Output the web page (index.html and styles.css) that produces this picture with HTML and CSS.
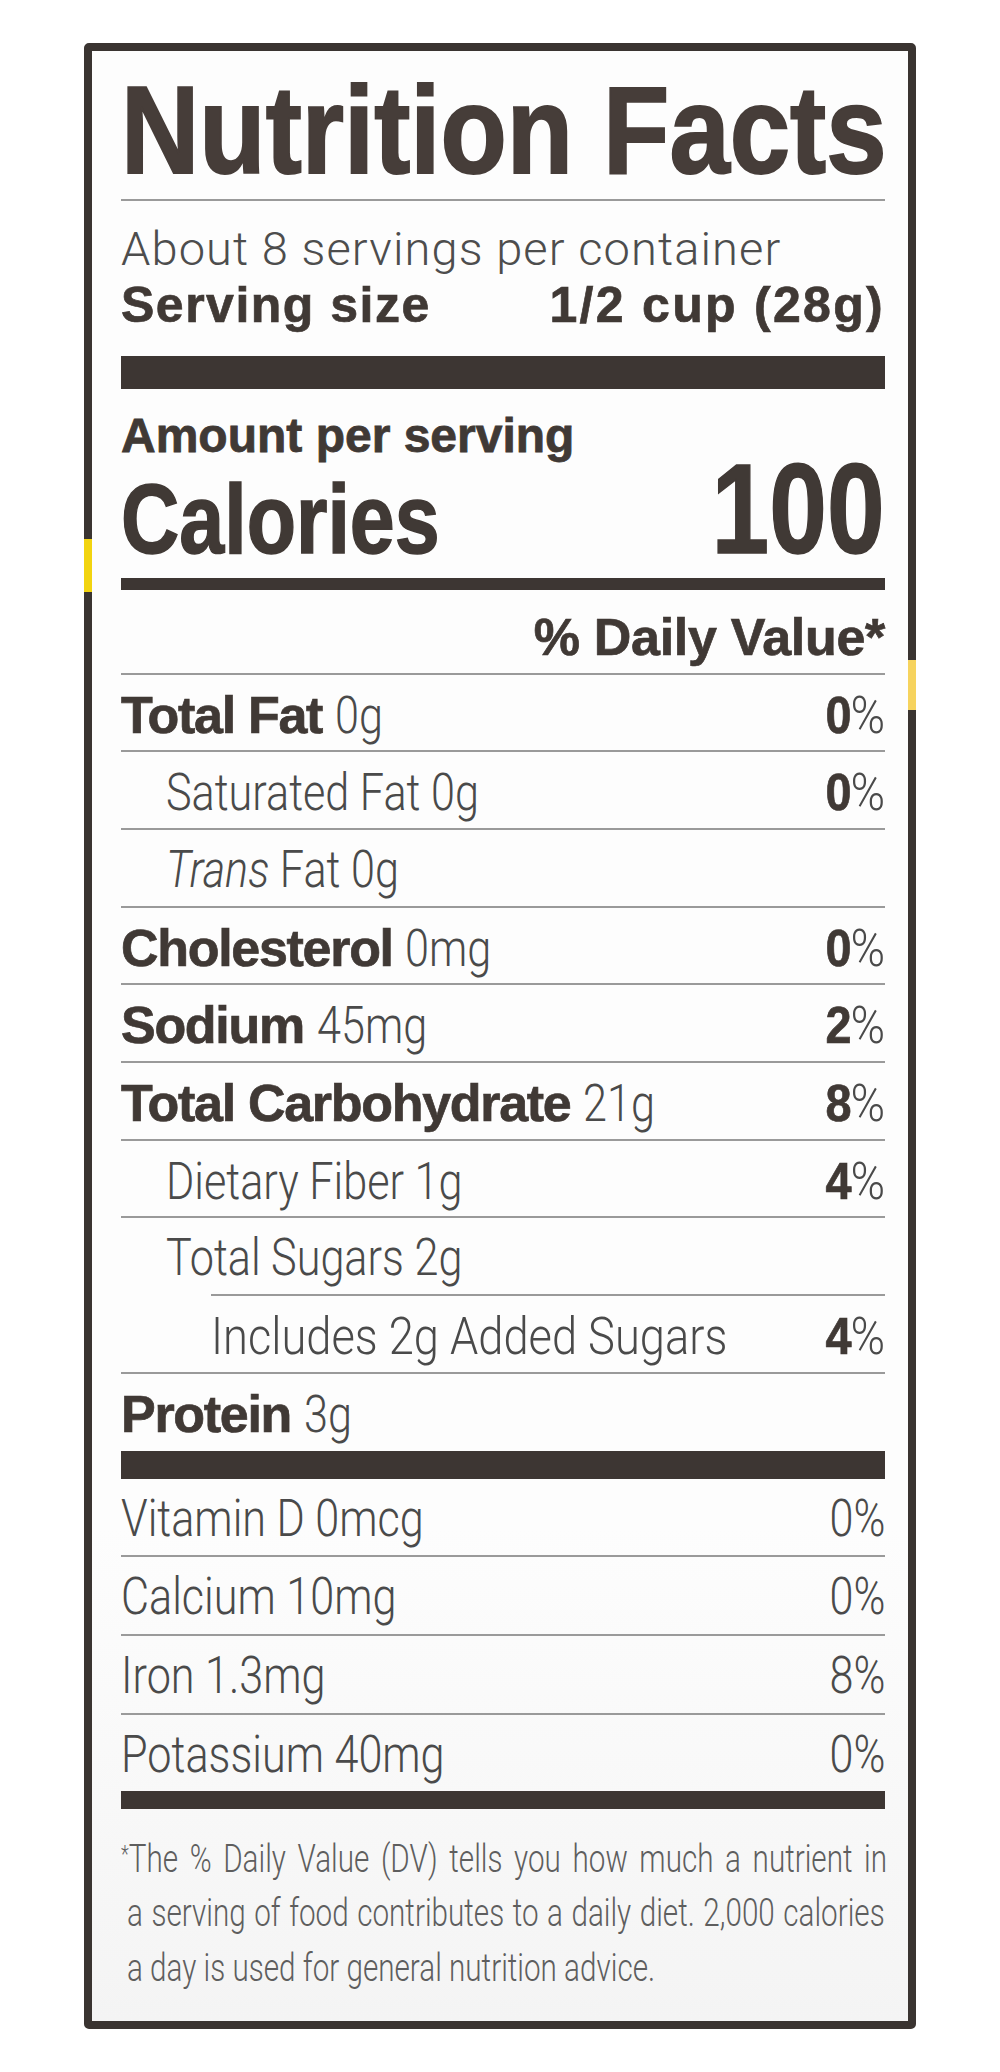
FILE: index.html
```html
<!DOCTYPE html>
<html lang="en">
<head>
    <meta charset="UTF-8">
    <meta name="viewport" content="width=device-width, initial-scale=1.0">
    <title>Nutrition Facts</title>
    <link rel="stylesheet" href="styles.css">
</head>
<body>
    <div class="label">
        <span class="smudge smudge-left"></span>
        <span class="smudge smudge-right"></span>

        <h1 class="title"><span class="title-text">Nutrition Facts</span></h1>

        <p class="per-container">About 8 servings per container</p>
        <p class="serving-size"><span>Serving size</span><span class="serving-amount">1/2 cup (28g)</span></p>
        <div class="bar bar-thick"></div>

        <p class="amount">Amount per serving</p>
        <p class="calories"><span class="cal-label">Calories</span><span class="cal-value">100</span></p>
        <div class="bar bar-medium"></div>

        <p class="dv-head">% Daily Value*</p>

        <div class="row"><span><b>Total Fat</b> <span class="cond">0g</span></span><span class="pct"><b>0</b>%</span></div>
        <div class="row sub"><span class="cond">Saturated Fat 0g</span><span class="pct"><b>0</b>%</span></div>
        <div class="row sub"><span class="cond"><i>Trans</i> Fat 0g</span></div>
        <div class="row"><span><b>Cholesterol</b> <span class="cond">0mg</span></span><span class="pct"><b>0</b>%</span></div>
        <div class="row"><span><b>Sodium</b> <span class="cond">45mg</span></span><span class="pct"><b>2</b>%</span></div>
        <div class="row"><span><b>Total Carbohydrate</b> <span class="cond">21g</span></span><span class="pct"><b>8</b>%</span></div>
        <div class="row sub"><span class="cond">Dietary Fiber 1g</span><span class="pct"><b>4</b>%</span></div>
        <div class="row sub"><span class="cond">Total Sugars 2g</span></div>
        <div class="row added"><span class="cond">Includes 2g Added Sugars</span><span class="pct"><b>4</b>%</span></div>
        <div class="row protein"><span><b>Protein</b> <span class="cond">3g</span></span></div>
        <div class="bar bar-protein"></div>

        <div class="row vit first"><span class="cond">Vitamin D 0mcg</span><span class="pct light">0%</span></div>
        <div class="row vit"><span class="cond">Calcium 10mg</span><span class="pct light">0%</span></div>
        <div class="row vit"><span class="cond">Iron 1.3mg</span><span class="pct light">8%</span></div>
        <div class="row vit last"><span class="cond">Potassium 40mg</span><span class="pct light">0%</span></div>
        <div class="bar bar-thin"></div>

        <p class="footnote">
            <span class="fn-line"><span class="ast">*</span>The % Daily Value (DV) tells you how much a nutrient in</span>
            <span class="fn-line">a serving of food contributes to a daily diet. 2,000 calories</span>
            <span class="fn-line">a day is used for general nutrition advice.</span>
        </p>
    </div>
</body>
</html>
```

FILE: styles.css
```css
body {
    margin: 0;
    background-color: #ffffff;
    font-family: "Liberation Sans", Arial, sans-serif;
    color: #403935;
}
.label {
    position: relative;
    width: 832px;
    margin: 43px auto 0;
    box-sizing: border-box;
    border: 8px solid #3a3431;
    border-radius: 5px;
    padding: 0 23px 26px 29px;
    background: linear-gradient(#fdfdfd 75%, #f4f4f4);
}
.smudge {
    position: absolute;
    width: 8px;
}
.smudge-left {
    left: -8px;
    top: 488px;
    height: 53px;
    background-color: #f2d410;
}
.smudge-right {
    right: -8px;
    top: 609px;
    height: 50px;
    background-color: #f6d35e;
}
.title {
    margin: 0;
    padding: 17px 0 7px;
    font-weight: 700;
    font-size: 124px;
    line-height: 124px;
    white-space: nowrap;
    border-bottom: 2px solid #9a9a9a;
    color: #463d39;
}
.title-text {
    display: inline-block;
    transform: scaleX(0.875);
    transform-origin: left center;
    -webkit-text-stroke: 2px #463d39;
}
.per-container {
    margin: 20px 0 0;
    font-family: Roboto, sans-serif;
    font-weight: 300;
    font-size: 47px;
    line-height: 56px;
    letter-spacing: 1.1px;
    color: #4d4d4d;
}
.serving-size {
    display: flex;
    justify-content: space-between;
    margin: 0;
    font-weight: 700;
    font-size: 50px;
    line-height: 56px;
    letter-spacing: 1.5px;
    -webkit-text-stroke: 0.7px #403935;
}
.serving-amount {
    letter-spacing: 2.3px;
}
.bar {
    background-color: #3d3633;
}
.bar-thick {
    height: 33px;
    margin-top: 23px;
}
.amount {
    margin: 19px 0 0;
    font-weight: 700;
    font-size: 48px;
    line-height: 56px;
    -webkit-text-stroke: 0.8px #403935;
}
.calories {
    display: flex;
    justify-content: space-between;
    align-items: baseline;
    margin: 0;
    font-weight: 700;
    font-size: 98px;
    line-height: 0.7;
    white-space: nowrap;
}
.cal-label {
    transform: scaleX(0.824);
    transform-origin: left center;
    -webkit-text-stroke: 1.5px #403935;
}
.cal-value {
    font-size: 128px;
    transform: scaleX(0.81);
    transform-origin: right center;
    -webkit-text-stroke: 1.5px #403935;
}
.bar-medium {
    height: 12px;
    margin-top: 24px;
}
.dv-head {
    margin: 0;
    padding: 19px 0 8px;
    text-align: right;
    font-weight: 700;
    font-size: 52px;
    line-height: 56px;
    letter-spacing: -0.3px;
    -webkit-text-stroke: 0.7px #403935;
}
.row {
    display: flex;
    justify-content: space-between;
    align-items: baseline;
    box-sizing: border-box;
    height: 77.7px;
    padding-top: 14px;
    border-top: 2px solid #9a9a9a;
    font-family: Roboto, sans-serif;
    font-weight: 300;
    font-size: 52px;
    line-height: 52px;
    color: #4a4a4a;
    white-space: nowrap;
}
.row b {
    font-family: "Liberation Sans", Arial, sans-serif;
    font-weight: 700;
    letter-spacing: -1.3px;
    color: #403935;
    -webkit-text-stroke: 0.7px #403935;
}
.cond {
    display: inline-block;
    transform: scaleX(0.83);
    transform-origin: left center;
}
.pct {
    transform: scaleX(0.9);
    transform-origin: right center;
}
.pct.light {
    transform: scaleX(0.83);
}
.row.sub {
    padding-left: 45px;
}
.row.added {
    margin-left: 90px;
}
.row.added .cond {
    transform: scaleX(0.87);
}
.row.protein {
    height: 79px;
}
.bar-protein {
    height: 28px;
}
.row.vit {
    height: 79px;
}
.row.vit.first {
    height: 76px;
    border-top: none;
}
.row.vit.last {
    height: 78px;
}
.bar-thin {
    height: 18px;
}
.footnote {
    margin: 0;
    padding: 23px 0 0 6px;
    font-family: Roboto, sans-serif;
    font-weight: 300;
    font-size: 39px;
    line-height: 54.5px;
    color: #5e5e5e;
}
.fn-line {
    display: block;
    width: 997px;
    text-align: justify;
    text-align-last: justify;
    transform: scaleX(0.76);
    transform-origin: left center;
}
.fn-line:first-child {
    width: 1008px;
    margin-left: -6px;
}
.fn-line:last-child {
    text-align-last: left;
}
.ast {
    font-size: 24px;
    line-height: 1;
    vertical-align: 10px;
}
```
